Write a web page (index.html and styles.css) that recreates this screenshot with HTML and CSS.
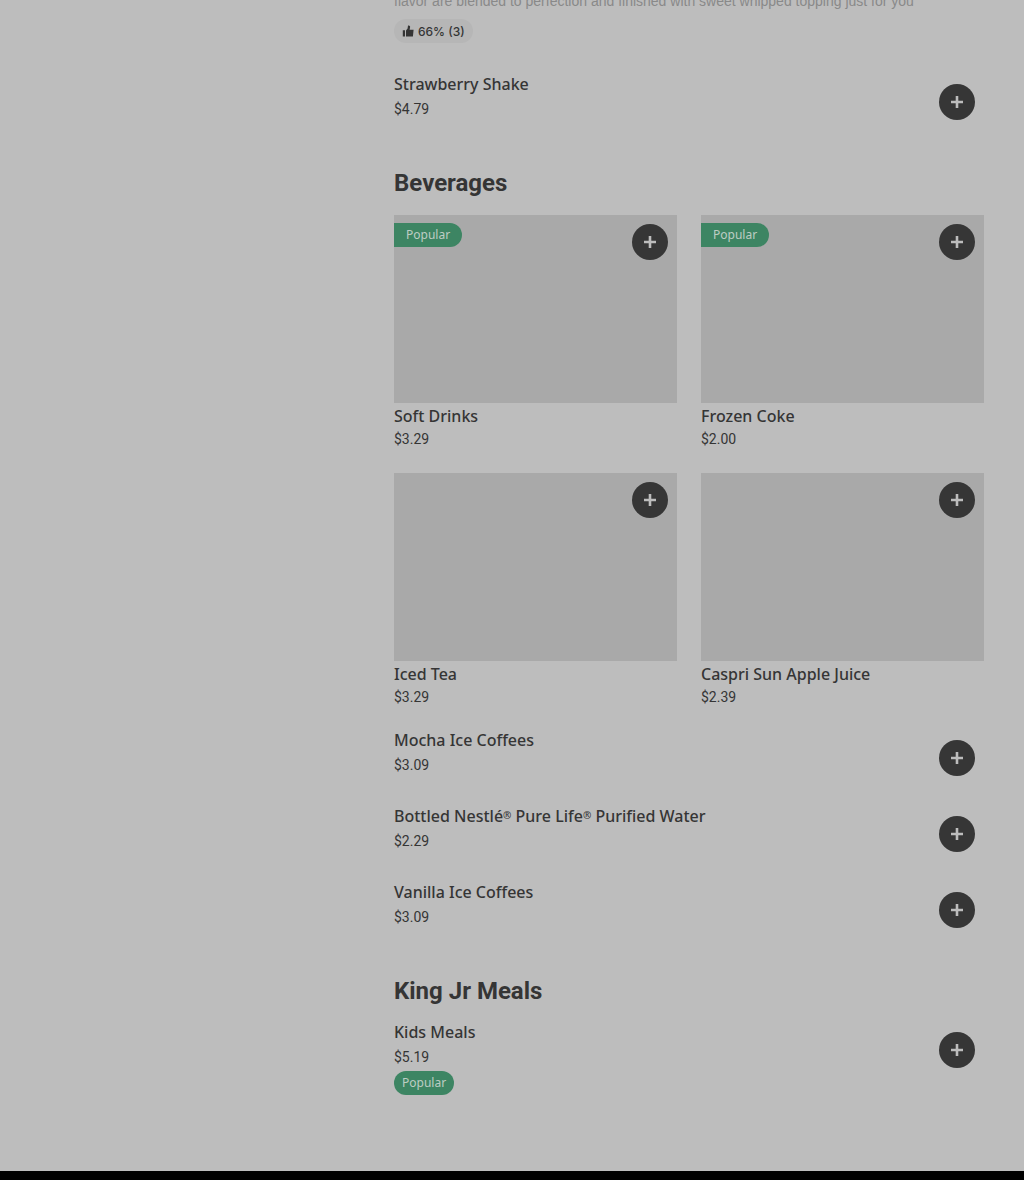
FILE: index.html
```html
<!DOCTYPE html>
<html lang="en">
<head>
    <meta charset="UTF-8">
    <meta name="viewport" content="width=device-width, initial-scale=1.0">
    <title>Menu</title>
    <link rel="stylesheet" href="styles.css">
</head>
<body>

<svg class="sprite" aria-hidden="true">
    <symbol id="plus" viewBox="0 0 12 12"><path d="M4.700 0h2.600v4.700H12v2.600H7.300V12H4.700V7.300H0V4.700h4.700z"/></symbol>
    <symbol id="thumb" viewBox="0 0 12 12"><path d="M.8 5.200h2.200v6.300H.8zM4 5.400 5.600 3.600 6 .5h.7C7.700.5 8.300 1.300 8.100 2.300L7.600 4.700H11.600L10.900 11.500H4z"/></symbol>
</svg>

<div class="page">
    <main class="menu">
        <ul class="list">
            <li class="item itemFirst">
                <div class="info">
                    <p class="desc">flavor are blended to perfection and finished with sweet whipped topping just for you</p>
                    <div class="rating"><svg><use href="#thumb"/></svg>66% (3)</div>
                </div>
            </li>
            <li class="item">
                <div class="info">
                    <h3 class="name">Strawberry Shake</h3>
                    <p class="price">$4.79</p>
                </div>
                <button class="add" aria-label="Add Strawberry Shake"><svg><use href="#plus"/></svg></button>
            </li>
        </ul>

        <h2 class="title">Beverages</h2>
        <ul class="cards">
            <li class="card">
                <div class="photo">
                    <span class="badge tag">Popular</span>
                    <button class="add" aria-label="Add Soft Drinks"><svg><use href="#plus"/></svg></button>
                </div>
                <h3 class="name">Soft Drinks</h3>
                <p class="price">$3.29</p>
            </li>
            <li class="card">
                <div class="photo">
                    <span class="badge tag">Popular</span>
                    <button class="add" aria-label="Add Frozen Coke"><svg><use href="#plus"/></svg></button>
                </div>
                <h3 class="name">Frozen Coke</h3>
                <p class="price">$2.00</p>
            </li>
            <li class="card">
                <div class="photo">
                    <button class="add" aria-label="Add Iced Tea"><svg><use href="#plus"/></svg></button>
                </div>
                <h3 class="name">Iced Tea</h3>
                <p class="price">$3.29</p>
            </li>
            <li class="card">
                <div class="photo">
                    <button class="add" aria-label="Add Caspri Sun Apple Juice"><svg><use href="#plus"/></svg></button>
                </div>
                <h3 class="name">Caspri Sun Apple Juice</h3>
                <p class="price">$2.39</p>
            </li>
        </ul>
        <ul class="list">
            <li class="item">
                <div class="info">
                    <h3 class="name">Mocha Ice Coffees</h3>
                    <p class="price">$3.09</p>
                </div>
                <button class="add" aria-label="Add Mocha Ice Coffees"><svg><use href="#plus"/></svg></button>
            </li>
            <li class="item">
                <div class="info">
                    <h3 class="name">Bottled Nestlé<sup>®</sup> Pure Life<sup>®</sup> Purified Water</h3>
                    <p class="price">$2.29</p>
                </div>
                <button class="add" aria-label="Add Purified Water"><svg><use href="#plus"/></svg></button>
            </li>
            <li class="item">
                <div class="info">
                    <h3 class="name">Vanilla Ice Coffees</h3>
                    <p class="price">$3.09</p>
                </div>
                <button class="add" aria-label="Add Vanilla Ice Coffees"><svg><use href="#plus"/></svg></button>
            </li>
        </ul>

        <h2 class="title">King Jr Meals</h2>
        <ul class="list">
            <li class="item">
                <div class="info">
                    <h3 class="name">Kids Meals</h3>
                    <p class="price">$5.19</p>
                    <span class="badge">Popular</span>
                </div>
                <button class="add" aria-label="Add Kids Meals"><svg><use href="#plus"/></svg></button>
            </li>
        </ul>
    </main>
</div>
<footer class="footer"></footer>

</body>
</html>
```
FILE: styles.css
```css
* {margin:0;padding:0;border:0;box-sizing:border-box;}
html {background:#000;}
body {
    color: #353535;
    font-family: "Noto Sans", "Liberation Sans", sans-serif;
    font-size: 14px;
}
ul {list-style:none;}
.sprite {display:none;}

.page {
    display: grid;
    grid-template-columns: 354px 1fr;
    padding: 0 40px 57px;
    background: #bdbdbd;
}
.menu {
    grid-column: 2;
    min-width: 0;
}
.title {
    margin: 27px 0 5px;
    font-family: Roboto, "Liberation Sans", sans-serif;
    font-size: 24px;
    font-weight: 700;
    line-height: 32px;
}
.name {
    font-size: 16px;
    font-weight: 500;
    line-height: 26px;
}
.name sup {
    font-size: 10px;
    line-height: 1;
    vertical-align: 3px;
}
.price {
    font-family: Roboto, "Liberation Sans", sans-serif;
    line-height: 24px;
}

/* rows */
.item {
    display: flex;
    align-items: flex-start;
    padding: 7px 9px 19px 0;
}
.item .add {margin-top: 13px;}
.info {
    flex: 1;
    min-width: 0;
}
.info .badge {margin-top: 2px;}
/* the menu is scrolled, so this row starts above the window */
.itemFirst {
    margin-top: -9px;
    padding: 0 0 21px;
}
.desc {
    color: #898989;
    font-family: "Liberation Sans", sans-serif;
    line-height: 20px;
}
.rating {
    display: flex;
    align-items: center;
    gap: 4px;
    width: fit-content;
    height: 24px;
    margin-top: 8px;
    padding: 0 8px;
    border-radius: 12px;
    background: #b6b6b6;
    font-family: Inter, "Liberation Sans", sans-serif;
    font-size: 12px;
    font-weight: 500;
}
.rating svg {
    width: 12px;
    height: 12px;
    fill: #353535;
}

/* cards */
.cards {
    display: grid;
    grid-template-columns: 1fr 1fr;
    gap: 24px;
    margin: 16px 0 13px;
}
.card .price {line-height: 20px;}
.photo {
    display: flex;
    justify-content: space-between;
    align-items: flex-start;
    aspect-ratio: 283 / 188;
    padding: 8px 9px 0 0;
    background: #a9a9a9;
}
.photo .add {
    margin-top: 1px;
    margin-left: auto;
}

.badge {
    display: block;
    width: fit-content;
    padding: 0 8px;
    border-radius: 12px;
    background: #3d8563;
    color: #bdcdc4;
    font-size: 12px;
    line-height: 24px;
}
.tag {
    padding: 0 12px;
    border-radius: 0 12px 12px 0;
}
.add {
    display: flex;
    justify-content: center;
    align-items: center;
    width: 36px;
    height: 36px;
    border-radius: 50%;
    background: #363636;
    cursor: pointer;
}
.add svg {
    width: 12px;
    height: 12px;
    fill: #bdbdbd;
}

.footer {
    height: 9px;
    background: #000;
}
```
